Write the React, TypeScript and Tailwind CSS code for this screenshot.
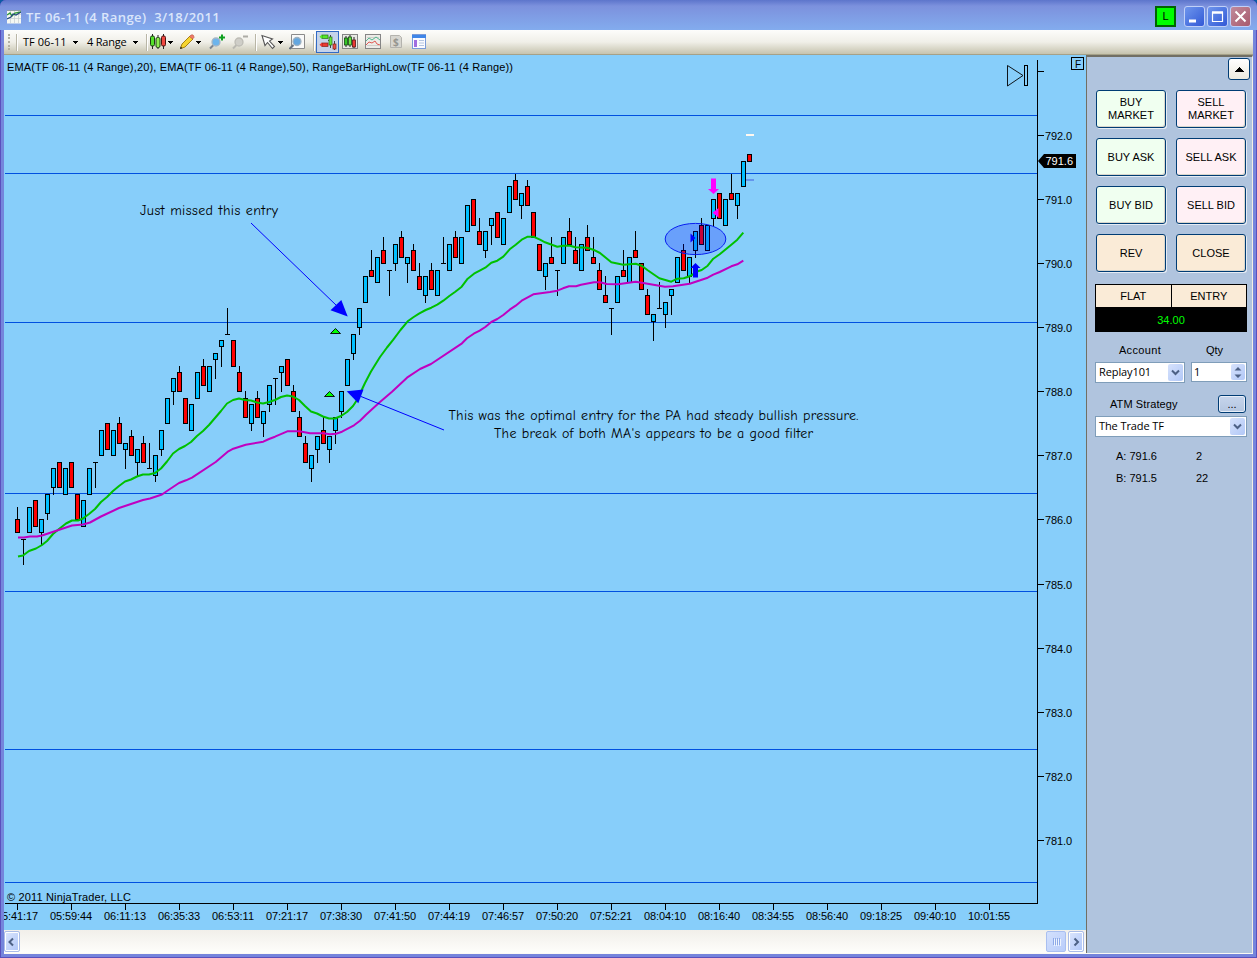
import type { ReactNode } from "react";

type Candle = [kind: "b" | "r" | "d", high: number, top: number, bottom: number, low: number];

const FIRST_X = 17;
const STEP = 6;

// b = up bar, r = down bar, d = doji
const candles: Candle[] = [
  ["r", 507, 519, 532, 532], ["d", 539, 539, 539, 564], ["b", 507, 507, 532, 532], ["r", 500, 500, 526, 526],
  ["b", 519, 519, 532, 545], ["b", 494, 494, 513, 519], ["b", 468, 468, 487, 494], ["r", 462, 462, 487, 487],
  ["b", 468, 468, 494, 494], ["r", 462, 462, 487, 487], ["r", 494, 494, 519, 519], ["b", 500, 500, 526, 526],
  ["b", 468, 468, 494, 494], ["d", 462, 462, 462, 487], ["b", 430, 430, 455, 455], ["r", 423, 423, 449, 449],
  ["b", 430, 430, 455, 455], ["r", 417, 423, 443, 443], ["b", 443, 443, 449, 468], ["r", 430, 436, 455, 455],
  ["b", 449, 449, 462, 475], ["r", 436, 443, 462, 462], ["d", 443, 468, 468, 468], ["b", 455, 455, 475, 481],
  ["b", 430, 430, 449, 455], ["b", 398, 398, 423, 423], ["b", 378, 378, 391, 404], ["r", 366, 372, 391, 391],
  ["r", 398, 398, 423, 423], ["b", 404, 404, 430, 430], ["b", 372, 372, 398, 398], ["r", 359, 366, 385, 385],
  ["b", 366, 366, 391, 391], ["b", 353, 353, 359, 378], ["b", 340, 340, 346, 366], ["d", 308, 334, 334, 334],
  ["r", 340, 340, 366, 366], ["r", 366, 372, 391, 391], ["r", 391, 398, 417, 417], ["b", 404, 404, 423, 430],
  ["r", 391, 398, 417, 417], ["b", 411, 411, 423, 436], ["b", 385, 385, 404, 411], ["d", 378, 378, 378, 404],
  ["b", 366, 366, 372, 391], ["r", 359, 359, 385, 385], ["r", 385, 391, 411, 411], ["r", 411, 417, 436, 436],
  ["r", 436, 443, 462, 462], ["b", 455, 455, 468, 481], ["b", 436, 436, 449, 462], ["r", 417, 430, 443, 443],
  ["b", 436, 436, 449, 462], ["b", 417, 417, 430, 443], ["b", 391, 391, 411, 417], ["b", 359, 359, 385, 385],
  ["b", 334, 334, 353, 359], ["b", 308, 308, 327, 334], ["b", 276, 276, 302, 302], ["r", 250, 270, 276, 276],
  ["b", 257, 257, 282, 282], ["r", 237, 250, 263, 263], ["d", 270, 270, 270, 295], ["b", 244, 244, 263, 270],
  ["r", 231, 237, 257, 257], ["b", 257, 257, 263, 282], ["r", 244, 250, 270, 270], ["r", 263, 276, 289, 289],
  ["b", 276, 276, 295, 302], ["r", 263, 270, 289, 289], ["b", 270, 270, 295, 295], ["d", 237, 263, 263, 263],
  ["b", 244, 244, 270, 270], ["r", 231, 237, 257, 257], ["b", 237, 237, 263, 263], ["b", 205, 205, 231, 231],
  ["r", 199, 199, 225, 225], ["r", 218, 231, 244, 244], ["b", 231, 231, 250, 257], ["b", 218, 218, 225, 244],
  ["r", 212, 212, 237, 237], ["b", 218, 218, 244, 244], ["b", 186, 186, 212, 212], ["r", 174, 180, 199, 199],
  ["b", 193, 193, 205, 218], ["r", 180, 186, 205, 205], ["r", 212, 212, 237, 237], ["r", 244, 244, 270, 270],
  ["b", 263, 263, 276, 289], ["r", 237, 257, 263, 263], ["d", 270, 270, 270, 295], ["b", 237, 237, 263, 263],
  ["r", 218, 231, 244, 244], ["r", 237, 250, 263, 263], ["b", 244, 244, 270, 270], ["r", 225, 237, 250, 250],
  ["r", 237, 257, 263, 263], ["r", 263, 270, 289, 289], ["r", 276, 295, 302, 302], ["d", 308, 308, 308, 334],
  ["b", 276, 276, 302, 302], ["r", 250, 270, 276, 276], ["b", 257, 257, 282, 282], ["r", 231, 250, 257, 257],
  ["r", 263, 263, 289, 289], ["r", 289, 295, 314, 314], ["b", 314, 314, 321, 340], ["d", 282, 308, 308, 308],
  ["b", 302, 302, 314, 327], ["b", 289, 289, 295, 314], ["b", 257, 257, 282, 282], ["r", 244, 250, 270, 270],
  ["b", 257, 257, 276, 282], ["b", 231, 231, 250, 257], ["r", 218, 225, 244, 244], ["b", 225, 225, 250, 250],
  ["b", 199, 199, 218, 225], ["r", 193, 193, 218, 218], ["b", 199, 199, 225, 225], ["r", 174, 193, 199, 199],
  ["b", 193, 193, 205, 218], ["b", 161, 161, 186, 186], ["r", 154, 154, 161, 161],
];

const ema20 =
  "18,556.5 23,555.5 29,551 36,548.5 42,545 47,541 53,534 59,529 66,523.5 72,520.5 78,520.5 83,518.5 89,514 95,509 101,502 107,497 113,491 119,486 125,481.5 131,479.5 137,476.5 143,474.5 149,474.5 155,473 161,468.5 167,461.5 173,453.5 179,449 185,446 191,442 197,436 203,431 209,425 215,418 221,411 227,403.5 233,400 239,398.5 245,400 251,400.5 257,402.5 263,403.5 269,402 275,400 281,397 287,395.5 293,396.5 299,400 305,406 311,411.5 317,413.5 323,416.5 329,418.5 335,418.5 341,416 347,412 353,406 357,400 365,383 371,371.5 380,357 387,347.5 393.3,339.7 400.5,330 407.7,321.3 413.7,317 419,313.7 425.7,310 431.3,307.7 437.3,304.7 443.3,300.7 449.3,296 455.3,291.7 461.7,286.7 467.7,278.7 474,273.7 479.7,270.7 485.3,267.7 491.3,262.7 497.3,260.7 503.3,256.7 509.7,249.3 515.7,244.7 521.7,239.7 527.7,236.7 533.3,236.7 540,239.7 545,242.3 557.3,246.7 563.3,245.7 570,245.7 575.3,247.3 587.3,247.7 593.3,249.7 600,253 611.3,262.3 623.3,264.7 635.7,263.7 641.7,265.7 647.7,270.3 659.3,278.3 671.3,281.7 677.3,278.7 683.7,278.3 689.7,276.3 697.7,271.3 701.7,270 707.7,265.7 713.3,258.7 719.7,254.3 731.3,244.7 737.3,239.7 743.3,232.7";

const ema50 =
  "18,537.5 24,537.5 30,536.5 37,536.5 42,535.5 48,533.5 60,529.5 72,525.5 83,524.5 90,522.5 101,516.5 119,508 143,500 150,498.5 162,494.5 167,491 179,483 186,480.3 192,477.7 215.7,462 228.3,451.3 233.3,448.7 245.7,444.7 263.3,441.7 269,439 275,436.7 287.3,431.3 299.3,431.3 310,433.3 323.3,433.3 330,434.3 336,433.7 342,431.7 354,425.3 360,420.7 366,414.7 372,409.3 380,402 392,391.7 407,377.7 420,369 431,364 462,343.3 467,338.3 473.7,333.7 479.7,330.7 485.3,327 491.3,322 497.3,319 503.3,315 509.7,309.7 515.7,305.7 521.7,300.7 533.3,294.3 550,292 557.3,290.7 563,288.3 569,286.3 576,286.3 581,284.7 594,282.3 600,282.3 606.7,284 618,284.3 635.7,281.7 647.7,283.7 665,286.7 673,286.3 689.7,283.7 707.7,277.7 713.3,274.7 719.7,272 731.3,266.3 737.3,264.3 743.3,260.7";

const levels = [115, 173, 322, 493, 591, 749, 882];

const priceTicks: [number, string][] = [
  [71, ""], [135, "792.0"], [199, "791.0"], [263, "790.0"], [327, "789.0"], [391, "788.0"], [455, "787.0"],
  [519, "786.0"], [584, "785.0"], [648, "784.0"], [712, "783.0"], [776, "782.0"], [840, "781.0"],
];

const times = [
  "05:41:17", "05:59:44", "06:11:13", "06:35:33", "06:53:11", "07:21:17", "07:38:30", "07:41:50", "07:44:19", "07:46:57",
  "07:50:20", "07:52:21", "08:04:10", "08:16:40", "08:34:55", "08:56:40", "09:18:25", "09:40:10", "10:01:55",
];

function CandleBar({ candle, x }: { candle: Candle; x: number }) {
  const [kind, high, top, bottom, low] = candle;
  return (
    <g shapeRendering="crispEdges">
      <rect x={x} y={high} width="1" height={low - high + 1} fill="#000" />
      {kind === "d" ? (
        <rect x={x - 2} y={top} width="5" height="1" fill="#000" />
      ) : (
        <rect x={x - 1.5} y={top + 0.5} width="4" height={bottom - top} fill={kind === "b" ? "#00bfff" : "#ff0000"} stroke="#000" />
      )}
    </g>
  );
}

function Chart() {
  return (
    <svg className="block bg-[#87cefa]" width="1082" height="875" viewBox="4 55 1082 875" fontFamily="'Liberation Sans', Arial, sans-serif" fontSize="11">
      {/* Price levels */}
      {levels.map((y) => (
        <rect key={y} x="5" y={y} width="1032" height="1" fill="#0050e0" />
      ))}

      {/* Axes */}
      <rect x="1037" y="60" width="1" height="844" fill="#000" />
      <rect x="5" y="903" width="1033" height="1" fill="#000" />
      {priceTicks.map(([y, label]) => (
        <g key={y}>
          <rect x="1038" y={y} width="6" height="1" fill="#000" />
          {label && <text x="1045" y={y + 5} textLength="27">{label}</text>}
        </g>
      ))}
      {times.map((time, i) => (
        <g key={time}>
          <rect x={17 + i * 54} y="904" width="1" height="6" fill="#000" />
          <text x={-4 + i * 54} y="920" textLength="42">{time}</text>
        </g>
      ))}

      {candles.map((candle, i) => (
        <CandleBar key={i} candle={candle} x={FIRST_X + i * STEP} />
      ))}

      {/* Moving averages */}
      <polyline points={ema20} fill="none" stroke="#00c000" strokeWidth="2" strokeLinejoin="round" />
      <polyline points={ema50} fill="none" stroke="#c000c0" strokeWidth="2" strokeLinejoin="round" />

      {/* Range bar high / low */}
      <rect x="746" y="134" width="8" height="2" fill="#fff8f0" />
      <rect x="746" y="179" width="8" height="2" fill="#6495ed" />

      {/* Executions */}
      <path d="M711 178.5h5v10.5h3l-5.500 5-5.500-5h3z" fill="#ff00ff" />
      <path d="M718.500 208v9.500l-6-4.800z" fill="#ff00ff" />
      <path d="M693 277.500h5V268h2.500l-5-5-5 5h2.500z" fill="#0000ff" />
      <path d="M690.500 233.500v9l5-4.500z" fill="#0000ff" />
      <ellipse cx="695.5" cy="239" rx="30.3" ry="15.6" fill="#0000ff" fillOpacity="0.22" stroke="#0820f0" />

      {/* Entry signals */}
      <path d="M335.500 328.500l5 5h-10z" fill="#00ff00" stroke="#000" strokeWidth="0.9" />
      <path d="M329.500 391.500l5 5h-10z" fill="#00ff00" stroke="#000" strokeWidth="0.9" />

      {/* Annotations */}
      <path d="M251 223L337 306M361 396.500L444 430" stroke="#0000ff" fill="none" />
      <path d="M341.300 300L330.500 310.200L347.700 316.500z" fill="#0000ff" />
      <path d="M346.700 391.300L363.500 389.500L358.300 403.200z" fill="#0000ff" />
      <g fontFamily="'Comic Sans MS', 'Comic Neue', Lato, sans-serif" fontSize="14">
        <text x="140" y="215" textLength="138">Just missed this entry</text>
        <text x="448.500" y="420" textLength="410">This was the optimal entry for the PA had steady bullish pressure.</text>
        <text x="494" y="438" textLength="319">The break of both MA&apos;s appears to be a good filter</text>
      </g>

      {/* Corner controls */}
      <path d="M1007.500 65.500v20.500L1023 75.500z" fill="none" stroke="#000" strokeWidth="0.9" />
      <rect x="1024.5" y="65.5" width="3" height="20" fill="none" stroke="#000" />
      <rect x="1071.5" y="57.5" width="12" height="12" fill="none" stroke="#000" />
      <text x="1075" y="68" fontSize="10">F</text>

      {/* Last price */}
      <path d="M1038 161l6-7h32v14h-32z" fill="#000" />
      <text x="1045.500" y="165" fill="#fff" textLength="27.500">791.6</text>

      <text x="7" y="71" textLength="506">EMA(TF 06-11 (4 Range),20), EMA(TF 06-11 (4 Range),50), RangeBarHighLow(TF 06-11 (4 Range))</text>
      <text x="7" y="901" textLength="124">© 2011 NinjaTrader, LLC</text>
    </svg>
  );
}

function TitleBar() {
  return (
    <header className="flex h-[30px] shrink-0 items-center rounded-t-md bg-linear-to-b from-[#5d75cb] via-[#7c91dd] via-20% to-[#83acee] pt-[3px] pr-[6px] pl-[7px]">
      <svg width="14" height="14" viewBox="0 0 14 14">
        <rect width="14" height="13" y=".5" fill="#f4f7f2" />
        <path d="M3.500 1v12M7.500 1v12M11.500 1v12M0 4.500h14M0 8.500h14" stroke="#c3cbd0" strokeWidth=".7" />
        <path d="M0 5l3-2 2 3 3-3 6-1" stroke="#2e9a36" fill="none" strokeWidth="1.300" />
        <path d="M0 9l4-2 2-3 3 1 5-3" stroke="#254a7c" fill="none" strokeWidth="1.300" />
        <path d="M0 .5h14" stroke="#8b9aa8" />
      </svg>
      <span className="ml-[5px] font-['Open_Sans'] text-[13px] leading-4 font-semibold tracking-[0.43px] whitespace-pre text-[#dbe6fb]">TF 06-11 (4 Range)  3/18/2011</span>
      <div className="ml-auto flex items-center">
        <div className="mr-2 flex size-[21px] items-center justify-center border-2 border-[#006400] bg-[#00ff00] text-[11px]">L</div>
        <div className="flex gap-[2px]">
          <CaptionButton className="bg-linear-to-br from-[#6f95ec] to-[#3358d6]">
            <path d="M4 14h7" stroke="#fff" strokeWidth="3" />
          </CaptionButton>
          <CaptionButton className="bg-linear-to-br from-[#6f95ec] to-[#3358d6]">
            <path d="M4.500 5.500h10v9h-10z" stroke="#fff" strokeWidth="1.200" fill="none" />
            <path d="M4 5.500h11" stroke="#fff" strokeWidth="2.500" />
          </CaptionButton>
          <CaptionButton className="bg-linear-to-br from-[#c08a9c] to-[#a85a6c]">
            <path d="M4.500 4.500l10 10M14.500 4.500l-10 10" stroke="#fff" strokeWidth="2" />
          </CaptionButton>
        </div>
      </div>
    </header>
  );
}

function CaptionButton({ className, children }: { className: string; children: ReactNode }) {
  return (
    <button className={`size-[21px] rounded-[3px] border border-[#c0d0f8] ${className}`}>
      <svg width="19" height="19" viewBox="0 0 19 19">{children}</svg>
    </button>
  );
}

function Caret({ className }: { className?: string }) {
  return (
    <svg className={className} width="5" height="3" viewBox="0 0 5 3" shapeRendering="crispEdges">
      <path d="M0 0h5L2.500 3z" />
    </svg>
  );
}

function Divider({ className }: { className: string }) {
  return <div className={`h-[17px] w-[2px] border-l border-[#b9b6a6] bg-white ${className}`} />;
}

function Icon({ className = "", children }: { className?: string; children: ReactNode }) {
  return <svg className={`shrink-0 ${className}`} width="16" height="16" viewBox="0 0 16 16">{children}</svg>;
}

function Toolbar() {
  return (
    <div className="flex h-[25px] shrink-0 items-center border-b border-[#a5a188] bg-linear-to-b from-[#fdfdfb] via-[#f0efe8] to-[#c6c3ae] pl-1 font-['Open_Sans'] text-[11px]">
      <div className="h-4 w-[2px] border-l-2 border-dotted border-[#b4b1a2]" />
      <Divider className="ml-[6px]" />
      <span className="ml-[5px] w-[50px] tracking-[0.05px] whitespace-nowrap">TF 06-11</span>
      <Caret />
      <span className="ml-[9px] w-[46px] tracking-[-0.2px] whitespace-nowrap">4 Range</span>
      <Caret />
      <Divider className="ml-[8px]" />

      {/* Chart style */}
      <Icon className="ml-[2px]">
        <path d="M2.500 0v15M8 1v14M13.500 0v15" stroke="#222" />
        <rect x=".5" y="2" width="4" height="10" rx="1.500" fill="#55e02a" stroke="#1c3d10" />
        <rect x="6" y="3.500" width="4" height="10" rx="1.500" fill="#8ded50" stroke="#1c3d10" />
        <rect x="11.500" y="2" width="4" height="10" rx="1.500" fill="#f04840" stroke="#4e1310" />
      </Icon>
      <Caret className="ml-[2px]" />
      {/* Drawing tools */}
      <Icon className="ml-[6px]">
        <path d="M1.500 14.500l1.500-4.500L11 2l3 3-8 8z" fill="#f6d530" stroke="#a58213" />
        <path d="M10.500 2.500l1.500-1.500q2-.5 2.500.5t.5 2l-1.500 1.500z" fill="#f27b6b" stroke="#b2503e" strokeWidth=".6" />
        <path d="M1 15l.7-2.500L3.500 14.300z" fill="#222" />
      </Icon>
      <Caret className="ml-[1px]" />
      <Icon className="ml-[8px]">
        <path d="M1 14.500l4-4" stroke="#7d8590" strokeWidth="2" />
        <circle cx="7" cy="8" r="4" fill="#6cb4ec" stroke="#a5b6c5" strokeWidth="1.300" />
        <path d="M10 3.500h6M13 .5v6" stroke="#10a020" strokeWidth="2" />
      </Icon>
      <Icon className="ml-[7px]">
        <path d="M1 14.500l4-4" stroke="#b9b8b1" strokeWidth="2" />
        <circle cx="7" cy="8" r="4" fill="#cfcec8" stroke="#bdbcb5" strokeWidth="1.300" />
        <path d="M11 2.500h5" stroke="#adaca6" strokeWidth="2" />
      </Icon>
      <Divider className="ml-[7px]" />
      <Icon className="ml-[4px]">
        <path d="M1 1.500l3 10 2.500-3 5 6 2-2-5-5.500 3-2z" fill="#fff" stroke="#555" strokeWidth="1.100" />
      </Icon>
      <Caret className="ml-[1px]" />
      <Icon className="ml-[6px]">
        <path d="M2.500.5h13v14h-13z" fill="#f9f9f9" stroke="#8b8b8b" />
        <path d="M.5 15l4-4" stroke="#687380" strokeWidth="2" />
        <circle cx="8" cy="7.500" r="4" fill="#62a6e0" stroke="#9fb2c1" strokeWidth="1.300" />
      </Icon>
      <Divider className="ml-[8px]" />

      {/* Chart trader, active */}
      <button className="ml-px flex h-[22px] w-[23px] shrink-0 items-center justify-center border border-[#316ac5] bg-[#c5d3ea]">
        <svg width="19" height="18" viewBox="0 0 19 18">
          <rect x="4" y="2" width="6" height="3.500" fill="#55e72a" stroke="#267318" strokeWidth=".7" />
          <path d="M4 1.500L1.500 3.700 4 6" fill="#55e72a" />
          <rect x="4" y="10" width="6" height="3.500" fill="#ed3a32" stroke="#7c221d" strokeWidth=".7" />
          <path d="M4 9.500l-2.500 2.200L4 14" fill="#ed3a32" />
          <path d="M10 7.500h4M12.500 2v13M16.500 8v9" stroke="#444" />
          <rect x="11" y="4" width="3" height="8" fill="#64e83a" stroke="#286e1b" strokeWidth=".7" />
          <rect x="15" y="11" width="3" height="5" fill="#ed5148" stroke="#7c221d" strokeWidth=".7" />
        </svg>
      </button>
      <Icon className="ml-[3px]">
        <rect x=".5" y=".5" width="15" height="14" fill="#e8e8e4" stroke="#858585" />
        <path d="M4 2v11M8 1v12M12 3v11" stroke="#222" />
        <rect x="2.500" y="4" width="3" height="7" fill="#35c527" stroke="#164a0f" strokeWidth=".8" />
        <rect x="6.500" y="3" width="3" height="8" fill="#6be642" stroke="#164a0f" strokeWidth=".8" />
        <rect x="10.500" y="6" width="3" height="7" fill="#e93a33" stroke="#5a1512" strokeWidth=".8" />
      </Icon>
      <Icon className="ml-[7px]">
        <rect x=".5" y=".5" width="15" height="14" fill="#ecebe8" stroke="#858585" />
        <path d="M2 3.500h12M2 11.500h12" stroke="#d0cfca" />
        <path d="M1 7l3-3 3 2 4-3 4 3" stroke="#52b890" fill="none" />
        <path d="M1 11l3-3 3 1 3-2 2 3 3 1" stroke="#e05a54" fill="none" />
      </Icon>
      <Icon className="ml-[7px]">
        <path d="M2.500 1.500h9l2 2v10h-11z" fill="#d7d6d0" stroke="#b4b3ae" />
        <text x="5" y="12" fontSize="10" fontWeight="bold" fill="#96958f">$</text>
      </Icon>
      <Icon className="ml-[7px]">
        <rect x="1.500" y=".5" width="13" height="14" fill="#fbfbff" stroke="#7a9bd8" />
        <path d="M1 2.500h14" stroke="#3f86e8" strokeWidth="3" />
        <path d="M4.500 6v7" stroke="#a06de0" strokeWidth="3" />
        <path d="M8 6.500h5M8 9h5M8 11.500h5" stroke="#b4c6e0" />
      </Icon>
    </div>
  );
}

function ScrollBar() {
  return (
    <div className="flex h-[23px] items-center bg-linear-to-b from-[#f1efea] to-[#fefefb] pr-[2px]">
      <ScrollButton d="M8 4.500L4.500 8 8 11.500" />
      <div className="mr-[2px] ml-auto flex h-[21px] w-5 items-center justify-center gap-px rounded-[2px] border border-[#a9bff0] bg-linear-to-br from-[#d3e0fd] to-[#b9cdfa]">
        {[0, 1, 2, 3].map((i) => (
          <div key={i} className="h-[7px] w-px bg-[#8da9e8] shadow-[1px_1px_0_#eef4fe]" />
        ))}
      </div>
      <ScrollButton d="M5.500 4.500L9 8l-3.500 3.500" />
    </div>
  );
}

function ScrollButton({ d }: { d: string }) {
  return (
    <button className="flex h-[21px] w-4 items-center justify-center rounded-[2px] border border-[#a9bce8] bg-linear-to-br from-[#dce6fd] to-[#afc6f8] shadow-[inset_0_0_0_1px_white]">
      <svg width="14" height="16" viewBox="0 0 14 16" fill="none" stroke="#4d6185" strokeWidth="2">
        <path d={d} />
      </svg>
    </button>
  );
}

function OrderButton({ className, children }: { className: string; children: ReactNode }) {
  return (
    <button className={`h-[38px] w-[70px] rounded-[3px] border border-[#003c74] text-[11px] leading-[13px] shadow-[1px_1px_0_#e6ecf4,inset_-1px_-1px_0_#d9d6cc] ${className}`}>
      {children}
    </button>
  );
}

function Combo({ value, className }: { value: string; className: string }) {
  return (
    <div className={`flex h-[21px] items-center justify-between border border-[#7f9db9] bg-white pr-px pl-[3px] font-['Open_Sans'] text-[11px] tracking-[-0.1px] ${className}`}>
      <span>{value}</span>
      <span className="flex h-[17px] w-[15px] items-center justify-center rounded-[2px] bg-linear-to-br from-[#d6e2fc] to-[#b2c8f7]">
        <svg width="9" height="7" viewBox="0 0 9 7" fill="none" stroke="#4d6185" strokeWidth="2">
          <path d="M1 1.500l3.500 3.500L8 1.500" />
        </svg>
      </span>
    </div>
  );
}

function TraderPanel() {
  return (
    <aside className="flex w-[167px] shrink-0 flex-col border-t-2 border-r border-l border-t-[#716f64] border-r-[#f3f0e4] border-l-[#716f64] bg-[#b0c4de] px-[8px] text-[11px]">
      <div className="flex h-[33px] justify-end pt-px">
        <button className="-mr-[6px] flex size-[22px] items-center justify-center rounded-[3px] border border-[#003c74] bg-linear-to-b from-white to-[#eceadf]">
          <svg width="9" height="5" viewBox="0 0 9 5" shapeRendering="crispEdges"><path d="M0 5h9L4.500 0z" /></svg>
        </button>
      </div>

      <div className="grid grid-cols-[70px_70px] gap-[10px] pl-px">
        <OrderButton className="bg-[#f0fff0]">BUY<br />MARKET</OrderButton>
        <OrderButton className="bg-[#fff0f5]">SELL<br />MARKET</OrderButton>
        <OrderButton className="bg-[#f0fff0]">BUY ASK</OrderButton>
        <OrderButton className="bg-[#fff0f5]">SELL ASK</OrderButton>
        <OrderButton className="bg-[#f0fff0]">BUY BID</OrderButton>
        <OrderButton className="bg-[#fff0f5]">SELL BID</OrderButton>
        <OrderButton className="bg-[#faebd7]">REV</OrderButton>
        <OrderButton className="bg-[#faebd7]">CLOSE</OrderButton>
      </div>

      {/* Position */}
      <div className="mt-[12px] w-[152px] border border-black bg-black">
        <div className="grid h-[22px] grid-cols-2 gap-px">
          <div className="flex items-center justify-center bg-[#faebd7]">FLAT</div>
          <div className="flex items-center justify-center bg-[#faebd7]">ENTRY</div>
        </div>
        <div className="flex h-6 items-center justify-center pt-[2px] text-[#00ff00]">34.00</div>
      </div>

      <div className="mt-[9px] flex h-[18px] w-[152px] items-center gap-[6px] text-center">
        <span className="w-[90px] tracking-[0.35px]">Account</span>
        <span className="w-[56px] pr-[9px]">Qty</span>
      </div>
      <div className="mt-[3px] flex w-[152px] gap-[6px]">
        <Combo value="Replay101" className="w-[90px]" />
        <div className="flex h-5 w-[56px] justify-between border border-[#7f9db9] bg-white pr-px pl-[2px] font-['Open_Sans']">
          <span className="leading-[17px]">1</span>
          <span className="my-px flex w-[14px] items-center justify-center rounded-[2px] bg-linear-to-br from-[#d6e2fc] to-[#b2c8f7]">
            <svg width="8" height="13" viewBox="0 0 8 13" fill="#4d6185">
              <path d="M.5 4.500h7L4 1zM.5 8.500h7L4 12z" />
            </svg>
          </span>
        </div>
      </div>

      <div className="mt-[12px] flex h-[18px] w-[151px] items-center justify-between pl-[15px]">
        <span className="tracking-[0.1px]">ATM Strategy</span>
        <button className="flex h-[18px] w-7 items-center justify-center rounded-[3px] border border-[#003c74] bg-linear-to-b from-[#c6d5ec] to-[#b4c6e0] shadow-[inset_0_0_0_1px_#e8eef7]">...</button>
      </div>
      <Combo value="The Trade TF" className="mt-[3px] w-[152px]" />

      <div className="mt-[8px] grid grid-cols-[80px_1fr] pl-[21px] leading-[22px]">
        <span>A: 791.6</span>
        <span>2</span>
        <span>B: 791.5</span>
        <span>22</span>
      </div>
    </aside>
  );
}

export default function App() {
  return (
    <div className="h-[958px] w-[1257px] bg-[#0d5aa5] font-['Liberation_Sans',Arial,sans-serif] text-black">
      <div className="flex h-full flex-col overflow-hidden rounded-t-md bg-[#7585dc] shadow-[inset_0_0_0_1px_#5a50bd]">
        <TitleBar />
        <div className="mx-1 flex h-[924px] flex-col border-b border-[#fbfaf4]">
          <Toolbar />
          <div className="flex h-[898px]">
            <div className="w-[1082px] shrink-0">
              <Chart />
              <ScrollBar />
            </div>
            <TraderPanel />
          </div>
        </div>
      </div>
    </div>
  );
}
